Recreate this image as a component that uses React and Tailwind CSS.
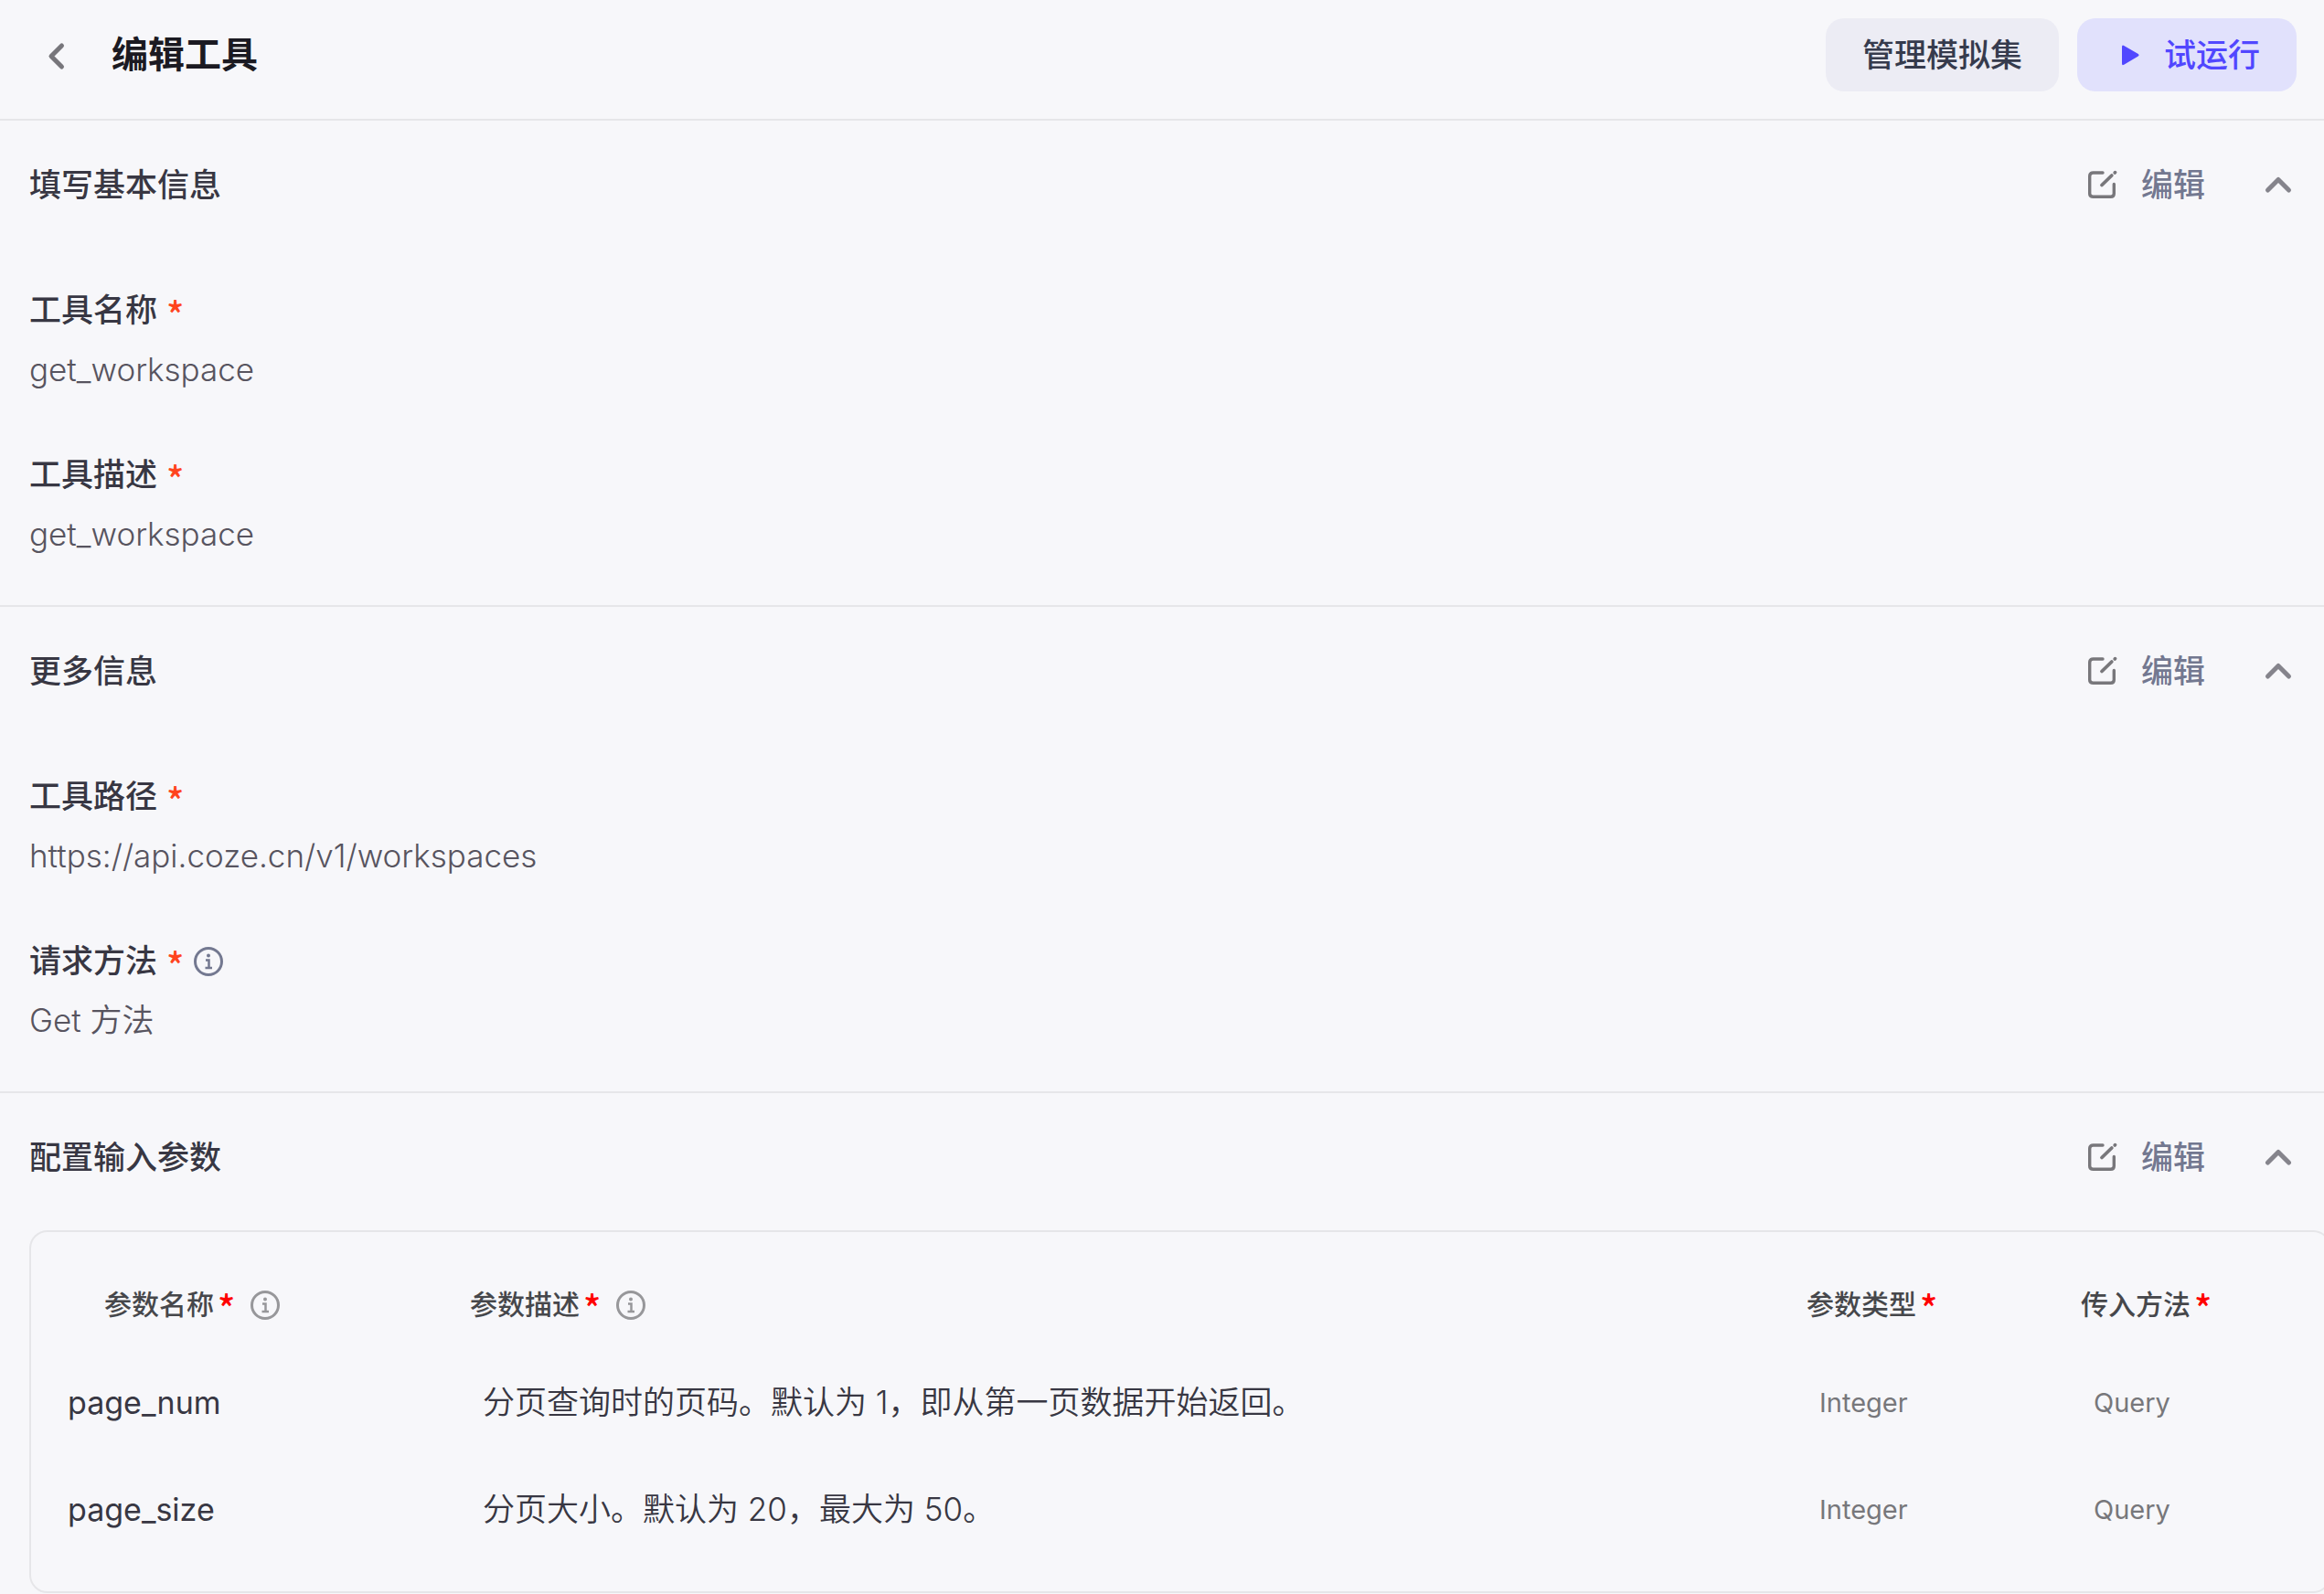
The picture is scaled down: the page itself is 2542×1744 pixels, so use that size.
import { useState } from 'react';
import { clsx } from 'clsx';

const PARAMS = [
  { name: 'page_num', desc: '分页查询时的页码。默认为 1，即从第一页数据开始返回。', type: 'Integer', method: 'Query' },
  { name: 'page_size', desc: '分页大小。默认为 20，最大为 50。', type: 'Integer', method: 'Query' },
];

function BackIcon() {
  return (
    <svg width="40" height="40" viewBox="0 0 40 40" fill="none" stroke="currentColor" strokeWidth="5" strokeLinecap="round" strokeLinejoin="round" aria-hidden="true">
      <path d="M25.500 10L14 21.500L25.500 33" />
    </svg>
  );
}

function PlayIcon() {
  return (
    <svg width="35" height="35" viewBox="0 0 35 35" fill="currentColor" aria-hidden="true">
      <path d="M9 8.200Q9 5.800 11.200 7L26.800 16Q28.600 17.300 26.800 18.500L11.200 27.700Q9 29 9 26.500Z" />
    </svg>
  );
}

function EditIcon() {
  return (
    <svg width="40" height="40" viewBox="0 0 40 40" fill="none" stroke="currentColor" strokeWidth="3.4" strokeLinecap="round" strokeLinejoin="round" aria-hidden="true">
      <path d="M20 7H9.500Q5.700 7 5.700 10.800V29.800Q5.700 33.300 9.500 33.300H28.700Q32.300 33.300 32.300 29.800V19.500" />
      <path d="M19 20.500L29.800 10M33.200 7L33.500 6.700" strokeWidth="3.8" />
    </svg>
  );
}

function ChevronIcon({ open }) {
  return (
    <svg className={clsx(!open && 'rotate-180')} width="40" height="40" viewBox="0 0 40 40" fill="none" stroke="currentColor" strokeWidth="5" strokeLinecap="round" strokeLinejoin="round" aria-hidden="true">
      <path d="M8.500 26L20 14.500L31.500 26" />
    </svg>
  );
}

function InfoIcon() {
  return (
    <svg width="34" height="34" viewBox="0 0 34 34" fill="none" stroke="currentColor" strokeWidth="3" aria-hidden="true">
      <circle cx="17" cy="17" r="14.500" />
      <circle cx="17" cy="10.500" r="2" fill="currentColor" stroke="none" />
      <path d="M14 15.500H17.500V23.500M13.500 24H21" strokeWidth="2.500" />
    </svg>
  );
}

function Section({ title, children }) {
  const [open, setOpen] = useState(true);

  return (
    <section className="border-b-2 border-[#e6e6e9] last:border-b-0">
      <div className="flex h-[140px] items-center pl-8 pr-5">
        <h2 className="flex-1 text-[35px] font-medium text-[#383743]">{title}</h2>
        <button type="button" className="flex items-center gap-[22px] text-[35px] font-medium text-[#737890]">
          <span className="text-[#78777b]"><EditIcon /></span>
          编辑
        </button>
        <button
          type="button"
          className="ml-[50px] flex size-15 items-center justify-center text-[#85848c]"
          onClick={() => setOpen(!open)}
          aria-expanded={open}
          aria-label={title}
        >
          <ChevronIcon open={open} />
        </button>
      </div>
      {open && children}
    </section>
  );
}

function Field({ label, info, children }) {
  return (
    <div className="flex flex-col gap-2.5 text-[35px] leading-[55px]">
      <dt className="flex items-center font-medium text-[#383743]">
        {label}
        <span className="ml-2.5 pt-1.5 font-['Noto_Sans_CJK_SC',sans-serif] text-[40px] leading-none text-[#ff441e]">*</span>
        {info && (
          <button type="button" className="ml-2.5 text-[#737890]" aria-label={`${label}说明`}><InfoIcon /></button>
        )}
      </dt>
      <dd className="font-[350] text-[#57545f]">{children}</dd>
    </div>
  );
}

function HeadCell({ label, info }) {
  return (
    <th scope="col" className="h-[97px] pl-10 text-left font-medium">
      <div className="flex items-center text-[30px] text-[#46474b]">
        {label}
        <span className="ml-1 pt-1 font-['Noto_Sans_CJK_SC',sans-serif] text-[40px] leading-none text-[#ff0000]">*</span>
        {info && (
          <button type="button" className="ml-4 text-[#97979a]" aria-label={`${label}说明`}><InfoIcon /></button>
        )}
      </div>
    </th>
  );
}

export default function App() {
  return (
    <div className="min-h-screen overflow-hidden bg-[#f7f7fa] font-['Inter','Noto_Sans_CJK_SC',sans-serif]">
      <header className="flex h-[132px] items-center gap-5 border-b-2 border-[#e6e6e9] pr-[30px] pl-[42px] pb-2.5">
        <button type="button" className="flex w-15 text-[#77767b]" aria-label="返回">
          <BackIcon />
        </button>
        <h1 className="flex-1 text-[40px] font-semibold text-[#1b1a22]">编辑工具</h1>
        <button type="button" className="h-20 rounded-[20px] bg-[#ececf4] px-10 text-[35px] font-medium text-[#363b4d]">
          管理模拟集
        </button>
        <button type="button" className="flex h-20 items-center gap-5 rounded-[20px] bg-[#e1e1fc] px-10 text-[35px] font-medium text-[#5147ff]">
          <PlayIcon />
          试运行
        </button>
      </header>

      <main>
        <Section title="填写基本信息">
          <dl className="flex flex-col gap-15 px-8 pt-10 pb-[50px]">
            <Field label="工具名称">get_workspace</Field>
            <Field label="工具描述">get_workspace</Field>
          </dl>
        </Section>

        <Section title="更多信息">
          <dl className="flex flex-col gap-15 px-8 pt-10 pb-[50px]">
            <Field label="工具路径">https://api.coze.cn/v1/workspaces</Field>
            <Field label="请求方法" info>Get 方法</Field>
          </dl>
        </Section>

        <Section title="配置输入参数">
          {/* The table runs wider than the page and is clipped on the right */}
          <div className="mt-2.5 ml-8 -mr-2 rounded-[20px] border-2 border-[#e6e6e9] py-[31px] pl-10">
            <table className="w-full table-fixed">
              <colgroup>
                <col className="w-[400px]" />
                <col />
                <col className="w-[300px]" />
                <col className="w-[312px]" />
              </colgroup>
              <thead>
                <tr>
                  <HeadCell label="参数名称" info />
                  <HeadCell label="参数描述" info />
                  <HeadCell label="参数类型" />
                  <HeadCell label="传入方法" />
                </tr>
              </thead>
              <tbody>
                {PARAMS.map(p => (
                  <tr key={p.name} className="h-[117px]">
                    <td className="text-[34px] text-[#383743]">{p.name}</td>
                    <td className="pl-[54px] text-[35px] font-[350] text-[#383743]">{p.desc}</td>
                    <td className="pl-[54px] text-[29px] text-[#77777b]">{p.type}</td>
                    <td className="pl-[54px] text-[29px] text-[#77777b]">{p.method}</td>
                  </tr>
                ))}
              </tbody>
            </table>
          </div>
        </Section>
      </main>
    </div>
  );
}
